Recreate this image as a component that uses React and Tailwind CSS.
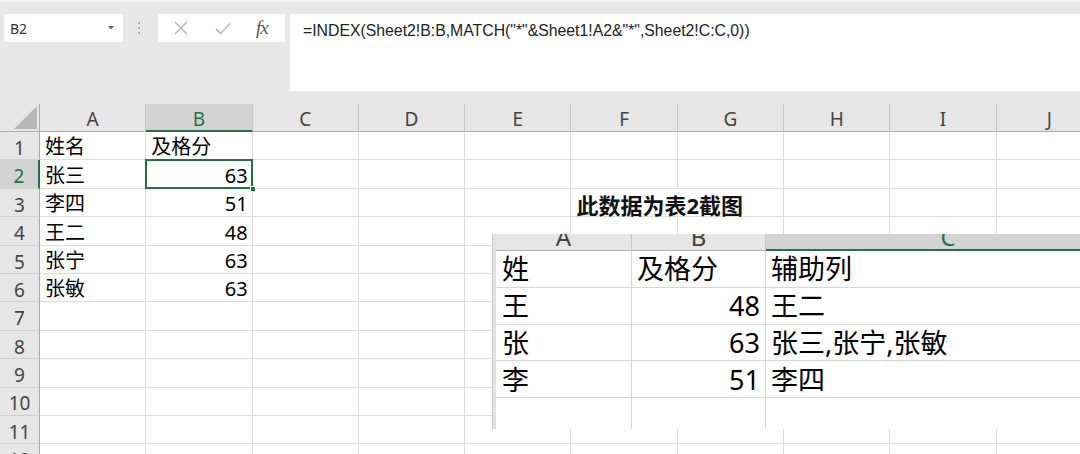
import React from 'react';

const GREEN = '#217346';
const COLS = ['A', 'B', 'C', 'D', 'E', 'F', 'G', 'H', 'I', 'J'];

const SHEET1 = [
  ['姓名', '及格分'],
  ['张三', 63],
  ['李四', 51],
  ['王二', 48],
  ['张宁', 63],
  ['张敏', 63],
];

const SHEET2 = [
  ['姓', '及格分', '辅助列'],
  ['王', 48, '王二'],
  ['张', 63, '张三,张宁,张敏'],
  ['李', 51, '李四'],
  ['', '', ''],
];

function FormulaBar() {
  return (
    <div className="flex items-start h-[104px] pt-[12px] pl-[4px] border-t-2 border-[#f4f4f4]">
      {/* 名称框 */}
      <div className="w-[119px] h-[28px] bg-white flex items-center justify-between pl-[6px] pr-[9px] text-[14px] text-[#333]">
        <span>B2</span>
        <svg width="6" height="4" viewBox="0 0 6 4">
          <path d="M0 0h6L3 3.5z" fill="#666" />
        </svg>
      </div>
      <div className="ml-[15px] h-[28px] flex flex-col justify-center gap-[3px]">
        <span className="w-[2px] h-[2px] bg-[#a8a8a8]" />
        <span className="w-[2px] h-[2px] bg-[#a8a8a8]" />
        <span className="w-[2px] h-[2px] bg-[#a8a8a8]" />
      </div>
      {/* 取消 / 确认 / fx */}
      <div className="ml-[18px] w-[127px] h-[28px] bg-white flex items-center">
        <svg className="ml-[16px]" width="14" height="14" viewBox="0 0 14 14">
          <path d="M1 1l12 12M13 1L1 13" stroke="#b4b4b4" strokeWidth="1.3" />
        </svg>
        <svg className="ml-[27px]" width="16" height="13" viewBox="0 0 16 13">
          <path d="M1 7l4.5 4.5L15 1.5" stroke="#bcbcbc" strokeWidth="1.8" fill="none" />
        </svg>
        <span className="ml-[25px] text-[19px] italic text-[#555] font-['Liberation_Serif',serif] tracking-[-1px]">fx</span>
      </div>
      {/* 编辑栏 */}
      <div className="ml-[5px] flex-1 h-[77px] bg-white pl-[13px] pt-[5px] text-[15.8px] text-[#222] font-['Liberation_Sans',sans-serif] whitespace-nowrap">
        =INDEX(Sheet2!B:B,MATCH("*"&amp;Sheet1!A2&amp;"*",Sheet2!C:C,0))
      </div>
    </div>
  );
}

function HeaderRow() {
  return (
    <div className="flex h-[28px]">
      <div className="w-[40px] shrink-0 bg-[#e6e6e6] border-r border-b border-[#ababab] flex items-end justify-end pr-[2px] pb-[2px]">
        <svg width="23" height="23" viewBox="0 0 23 23">
          <path d="M23 0V23H0z" fill="#b7b7b7" />
        </svg>
      </div>
      {COLS.map((c) => {
        const sel = c === 'B';
        return (
          <div
            key={c}
            className={
              sel
                ? 'w-[106.3px] shrink-0 bg-[#d3d3d3] border-r border-[#c6c6c6] border-b-2 border-b-[#217346] flex items-center justify-center pt-[4px] text-[19px] text-[#217346]'
                : 'w-[106.3px] shrink-0 bg-[#e6e6e6] border-r border-[#c6c6c6] border-b border-b-[#ababab] flex items-center justify-center pt-[4px] text-[19px] text-[#444]'
            }
          >
            {c}
          </div>
        );
      })}
    </div>
  );
}

function BodyRow({ n, data }) {
  const rowSel = n === 2;
  return (
    <div className="flex h-[28.4px]">
      <div
        className={
          rowSel
            ? 'w-[40px] shrink-0 bg-[#d3d3d3] border-r-2 border-r-[#217346] border-b border-b-[#d0d0d0] flex items-center justify-center pt-[5px] text-[19px] text-[#217346]'
            : 'w-[40px] shrink-0 bg-[#e6e6e6] border-r border-r-[#ababab] border-b border-b-[#d0d0d0] flex items-center justify-center pt-[5px] text-[19px] text-[#444]'
        }
      >
        {n}
      </div>
      {COLS.map((c, i) => {
        const v = data ? data[i] : undefined;
        const isNum = typeof v === 'number';
        const title = n === 3 && c === 'F';
        return (
          <div
            key={c}
            className={[
              'relative w-[106.3px] shrink-0 border-b border-[#dcdcdc] flex items-end leading-[24px] text-[20px] whitespace-nowrap',
              title ? 'border-r border-r-transparent' : 'border-r',
              isNum ? 'justify-end pr-[4px]' : 'pl-[5px]',
            ].join(' ')}
          >
            {v !== undefined && v}
            {title && (
              <span className="relative top-[1px] z-10 font-bold text-[22px] text-[#111]">此数据为表2截图</span>
            )}
            {rowSel && c === 'B' && (
              <>
                <span className="absolute -left-[1px] -top-[1px] -right-[1px] -bottom-[1px] border-2 border-[#217346]" />
                <span className="absolute -right-[4px] -bottom-[4px] w-[6px] h-[6px] bg-[#217346] border border-white z-10" />
              </>
            )}
          </div>
        );
      })}
    </div>
  );
}

function PastedShot() {
  return (
    <div className="absolute left-[492px] top-[234px] w-[588px] h-[195px] overflow-hidden bg-white flex">
      <div className="w-[4px] shrink-0 bg-[#e3e3e3] border-l border-[#c9c9c9]" />
      <div className="flex flex-col">
        <div className="flex h-[18px]">
          <div className="w-[136px] shrink-0 bg-[#e6e6e6] border-r border-[#c6c6c6] border-b border-b-[#b2b2b2] overflow-hidden text-center text-[24px] leading-[24px] text-[#444]">
            <div className="-mt-[9px]">A</div>
          </div>
          <div className="w-[134px] shrink-0 bg-[#e6e6e6] border-r border-[#c6c6c6] border-b border-b-[#b2b2b2] overflow-hidden text-center text-[24px] leading-[24px] text-[#444]">
            <div className="-mt-[9px]">B</div>
          </div>
          <div className="w-[364px] shrink-0 bg-[#d3d3d3] border-b-2 border-[#217346] overflow-hidden text-center text-[24px] leading-[24px] text-[#217346]">
            <div className="-mt-[9px]">C</div>
          </div>
        </div>
        {SHEET2.map((row, r) => (
          <div key={r} className="flex h-[36.75px] shrink-0">
            {row.map((v, i) => (
              <div
                key={i}
                className={[
                  'shrink-0 border-b border-[#d6d6d6] flex items-center leading-[37px] text-[27px] whitespace-nowrap',
                  i === 0 ? 'w-[136px] border-r pl-[6px]' : '',
                  i === 1 ? 'w-[134px] border-r' : '',
                  i === 2 ? 'w-[364px] pl-[5px]' : '',
                  typeof v === 'number' ? 'justify-end pr-[5px]' : i === 1 ? 'pl-[5px]' : '',
                ].join(' ')}
              >
                {v}
              </div>
            ))}
          </div>
        ))}
      </div>
    </div>
  );
}

export default function App() {
  const rows = Array.from({ length: 12 }, (_, k) => k + 1);
  return (
    <div className="relative w-[1080px] h-[454px] overflow-hidden bg-[#e8e8e8] text-black font-['Noto_Sans','Noto_Sans_CJK_SC',sans-serif]">
      <FormulaBar />
      <div className="w-[1103px] bg-white">
        <HeaderRow />
        {rows.map((n) => (
          <BodyRow key={n} n={n} data={SHEET1[n - 1]} />
        ))}
      </div>
      <PastedShot />
    </div>
  );
}
